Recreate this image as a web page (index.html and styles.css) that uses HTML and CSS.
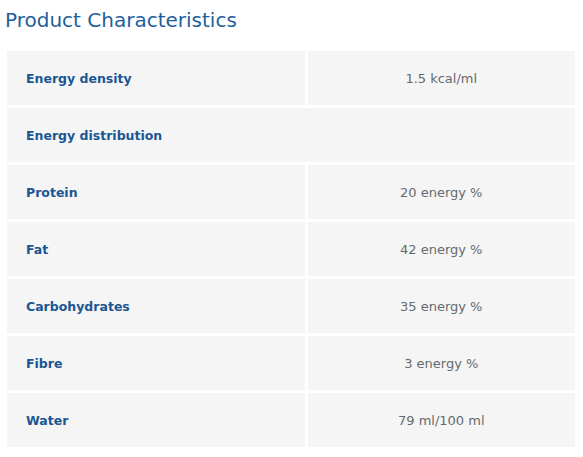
FILE: index.html
```html
<!DOCTYPE html>
<html>
<head>
<meta charset="utf-8">
<link rel="stylesheet" href="styles.css">
</head>
<body>
<div class="page">
  <h2 class="title">Product Characteristics</h2>
  <table class="specs">
    <tr><th>Energy density</th><td>1.5 kcal/ml</td></tr>
    <tr><th colspan="2">Energy distribution</th></tr>
    <tr><th>Protein</th><td>20 energy %</td></tr>
    <tr><th>Fat</th><td>42 energy %</td></tr>
    <tr><th>Carbohydrates</th><td>35 energy %</td></tr>
    <tr><th>Fibre</th><td>3 energy %</td></tr>
    <tr><th>Water</th><td>79 ml/100 ml</td></tr>
  </table>
</div>
</body>
</html>
```
FILE: styles.css
```css
html, body {
  margin: 0;
  padding: 0;
  background: #fff;
}
.page {
  padding: 6px 4px 0 4px;
  font-family: "DejaVu Sans", Verdana, sans-serif;
}
.title {
  margin: 0 0 14px 1px;
  font-size: 20px;
  font-weight: normal;
  color: #1f5f9e;
  line-height: 28px;
}
.specs {
  border-collapse: separate;
  border-spacing: 3px;
  width: 574px;
}
.specs th, .specs td {
  background: #f5f5f5;
  height: 54px;
  padding: 0;
}
.specs th {
  text-align: left;
  padding-left: 19px;
  color: #1b5694;
  font-weight: bold;
  font-size: 12.5px;
  width: 278px;
}
.specs td {
  text-align: center;
  color: #666a6e;
  font-size: 13px;
  width: 267px;
}
```
